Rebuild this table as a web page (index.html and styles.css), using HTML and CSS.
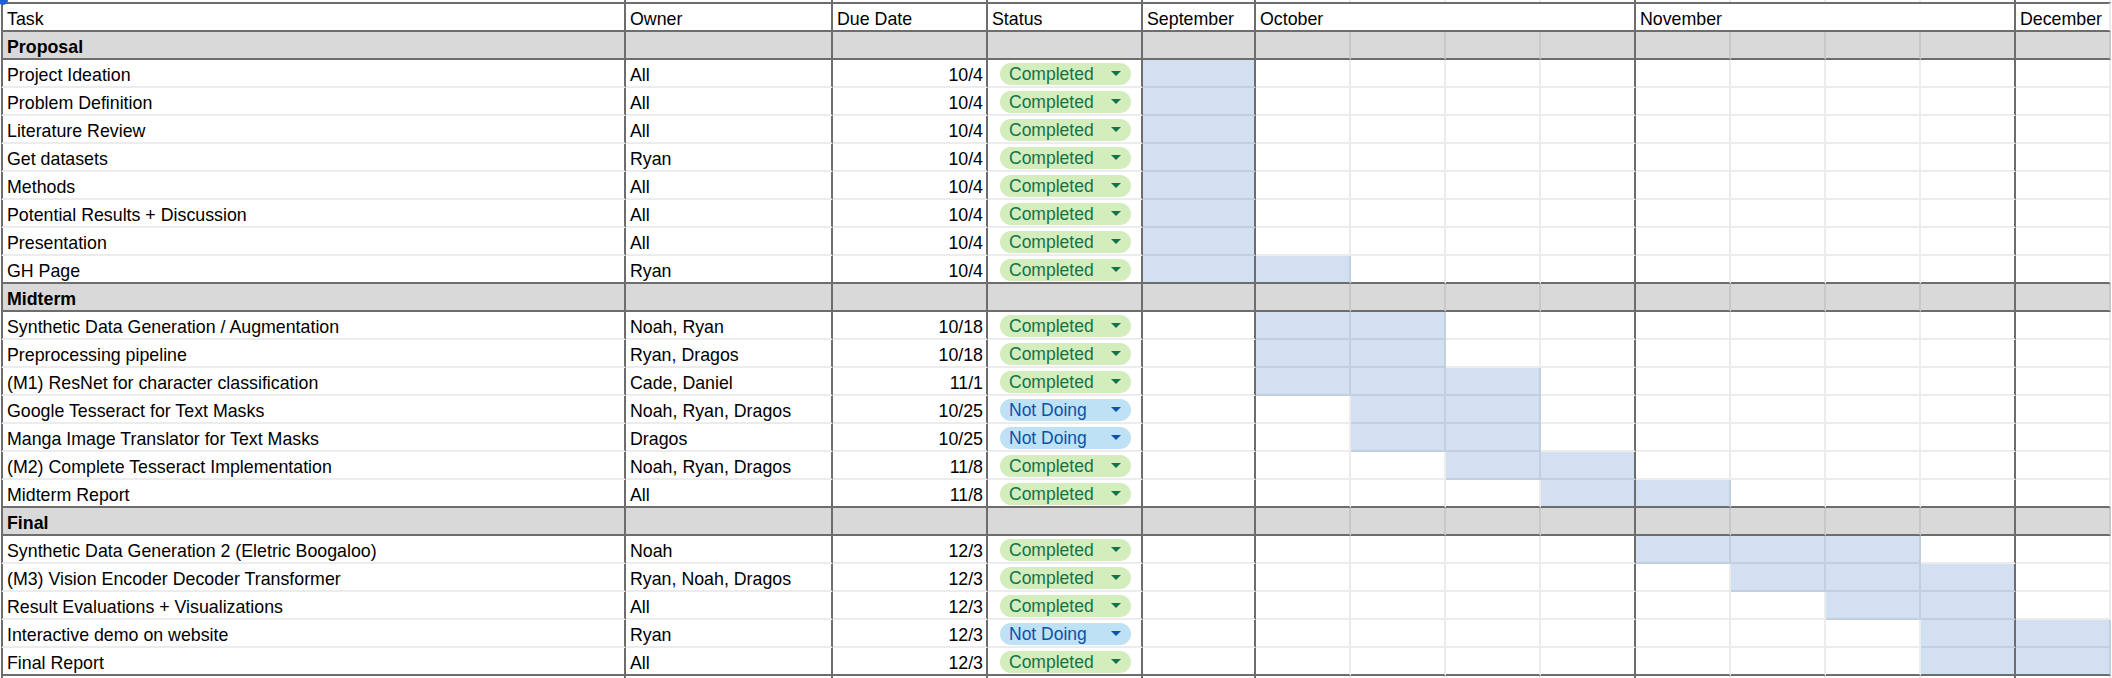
FILE: index.html
```html
<!DOCTYPE html>
<html lang="en">
<head>
<meta charset="utf-8">
<title>Project Timeline</title>
<link rel="stylesheet" href="styles.css">
</head>
<body>
<div class="sheet">
  <span class="dot"></span>
  <div class="row peek"><div></div><div></div><div></div><div></div><div></div><div></div><div></div><div></div><div></div><div></div><div></div><div></div><div></div><div></div></div>
  <div class="row head"><div>Task</div><div>Owner</div><div>Due Date</div><div>Status</div><div>September</div><div class="m4">October</div><div class="m4">November</div><div class="dec">December</div></div>

  <div class="row sec"><div>Proposal</div><div></div><div></div><div></div><div></div><div></div><div></div><div></div><div></div><div></div><div></div><div></div><div></div><div></div></div>
  <div class="row"><div>Project Ideation</div><div>All</div><div class="due">10/4</div><div class="status"><span class="pill done">Completed<svg class="caret" viewBox="0 0 10 5"><path d="M0 0H10L5 5Z"/></svg></span></div><div class="b"></div><div></div><div></div><div></div><div></div><div></div><div></div><div></div><div></div><div></div></div>
  <div class="row"><div>Problem Definition</div><div>All</div><div class="due">10/4</div><div class="status"><span class="pill done">Completed<svg class="caret" viewBox="0 0 10 5"><path d="M0 0H10L5 5Z"/></svg></span></div><div class="b"></div><div></div><div></div><div></div><div></div><div></div><div></div><div></div><div></div><div></div></div>
  <div class="row"><div>Literature Review</div><div>All</div><div class="due">10/4</div><div class="status"><span class="pill done">Completed<svg class="caret" viewBox="0 0 10 5"><path d="M0 0H10L5 5Z"/></svg></span></div><div class="b"></div><div></div><div></div><div></div><div></div><div></div><div></div><div></div><div></div><div></div></div>
  <div class="row"><div>Get datasets</div><div>Ryan</div><div class="due">10/4</div><div class="status"><span class="pill done">Completed<svg class="caret" viewBox="0 0 10 5"><path d="M0 0H10L5 5Z"/></svg></span></div><div class="b"></div><div></div><div></div><div></div><div></div><div></div><div></div><div></div><div></div><div></div></div>
  <div class="row"><div>Methods</div><div>All</div><div class="due">10/4</div><div class="status"><span class="pill done">Completed<svg class="caret" viewBox="0 0 10 5"><path d="M0 0H10L5 5Z"/></svg></span></div><div class="b"></div><div></div><div></div><div></div><div></div><div></div><div></div><div></div><div></div><div></div></div>
  <div class="row"><div>Potential Results + Discussion</div><div>All</div><div class="due">10/4</div><div class="status"><span class="pill done">Completed<svg class="caret" viewBox="0 0 10 5"><path d="M0 0H10L5 5Z"/></svg></span></div><div class="b"></div><div></div><div></div><div></div><div></div><div></div><div></div><div></div><div></div><div></div></div>
  <div class="row"><div>Presentation</div><div>All</div><div class="due">10/4</div><div class="status"><span class="pill done">Completed<svg class="caret" viewBox="0 0 10 5"><path d="M0 0H10L5 5Z"/></svg></span></div><div class="b"></div><div></div><div></div><div></div><div></div><div></div><div></div><div></div><div></div><div></div></div>
  <div class="row end"><div>GH Page</div><div>Ryan</div><div class="due">10/4</div><div class="status"><span class="pill done">Completed<svg class="caret" viewBox="0 0 10 5"><path d="M0 0H10L5 5Z"/></svg></span></div><div class="b"></div><div class="b"></div><div></div><div></div><div></div><div></div><div></div><div></div><div></div><div></div></div>

  <div class="row sec"><div>Midterm</div><div></div><div></div><div></div><div></div><div></div><div></div><div></div><div></div><div></div><div></div><div></div><div></div><div></div></div>
  <div class="row"><div>Synthetic Data Generation / Augmentation</div><div>Noah, Ryan</div><div class="due">10/18</div><div class="status"><span class="pill done">Completed<svg class="caret" viewBox="0 0 10 5"><path d="M0 0H10L5 5Z"/></svg></span></div><div></div><div class="b"></div><div class="b"></div><div></div><div></div><div></div><div></div><div></div><div></div><div></div></div>
  <div class="row"><div>Preprocessing pipeline</div><div>Ryan, Dragos</div><div class="due">10/18</div><div class="status"><span class="pill done">Completed<svg class="caret" viewBox="0 0 10 5"><path d="M0 0H10L5 5Z"/></svg></span></div><div></div><div class="b"></div><div class="b"></div><div></div><div></div><div></div><div></div><div></div><div></div><div></div></div>
  <div class="row"><div>(M1) ResNet for character classification</div><div>Cade, Daniel</div><div class="due">11/1</div><div class="status"><span class="pill done">Completed<svg class="caret" viewBox="0 0 10 5"><path d="M0 0H10L5 5Z"/></svg></span></div><div></div><div class="b"></div><div class="b"></div><div class="b"></div><div></div><div></div><div></div><div></div><div></div><div></div></div>
  <div class="row"><div>Google Tesseract for Text Masks</div><div>Noah, Ryan, Dragos</div><div class="due">10/25</div><div class="status"><span class="pill skip">Not Doing<svg class="caret" viewBox="0 0 10 5"><path d="M0 0H10L5 5Z"/></svg></span></div><div></div><div></div><div class="b"></div><div class="b"></div><div></div><div></div><div></div><div></div><div></div><div></div></div>
  <div class="row"><div>Manga Image Translator for Text Masks</div><div>Dragos</div><div class="due">10/25</div><div class="status"><span class="pill skip">Not Doing<svg class="caret" viewBox="0 0 10 5"><path d="M0 0H10L5 5Z"/></svg></span></div><div></div><div></div><div class="b"></div><div class="b"></div><div></div><div></div><div></div><div></div><div></div><div></div></div>
  <div class="row"><div>(M2) Complete Tesseract Implementation</div><div>Noah, Ryan, Dragos</div><div class="due">11/8</div><div class="status"><span class="pill done">Completed<svg class="caret" viewBox="0 0 10 5"><path d="M0 0H10L5 5Z"/></svg></span></div><div></div><div></div><div></div><div class="b"></div><div class="b"></div><div></div><div></div><div></div><div></div><div></div></div>
  <div class="row end"><div>Midterm Report</div><div>All</div><div class="due">11/8</div><div class="status"><span class="pill done">Completed<svg class="caret" viewBox="0 0 10 5"><path d="M0 0H10L5 5Z"/></svg></span></div><div></div><div></div><div></div><div></div><div class="b"></div><div class="b"></div><div></div><div></div><div></div><div></div></div>

  <div class="row sec"><div>Final</div><div></div><div></div><div></div><div></div><div></div><div></div><div></div><div></div><div></div><div></div><div></div><div></div><div></div></div>
  <div class="row"><div>Synthetic Data Generation 2 (Eletric Boogaloo)</div><div>Noah</div><div class="due">12/3</div><div class="status"><span class="pill done">Completed<svg class="caret" viewBox="0 0 10 5"><path d="M0 0H10L5 5Z"/></svg></span></div><div></div><div></div><div></div><div></div><div></div><div class="b"></div><div class="b"></div><div class="b"></div><div></div><div></div></div>
  <div class="row"><div>(M3) Vision Encoder Decoder Transformer</div><div>Ryan, Noah, Dragos</div><div class="due">12/3</div><div class="status"><span class="pill done">Completed<svg class="caret" viewBox="0 0 10 5"><path d="M0 0H10L5 5Z"/></svg></span></div><div></div><div></div><div></div><div></div><div></div><div></div><div class="b"></div><div class="b"></div><div class="b"></div><div></div></div>
  <div class="row"><div>Result Evaluations + Visualizations</div><div>All</div><div class="due">12/3</div><div class="status"><span class="pill done">Completed<svg class="caret" viewBox="0 0 10 5"><path d="M0 0H10L5 5Z"/></svg></span></div><div></div><div></div><div></div><div></div><div></div><div></div><div></div><div class="b"></div><div class="b"></div><div></div></div>
  <div class="row"><div>Interactive demo on website</div><div>Ryan</div><div class="due">12/3</div><div class="status"><span class="pill skip">Not Doing<svg class="caret" viewBox="0 0 10 5"><path d="M0 0H10L5 5Z"/></svg></span></div><div></div><div></div><div></div><div></div><div></div><div></div><div></div><div></div><div class="b"></div><div class="b"></div></div>
  <div class="row end"><div>Final Report</div><div>All</div><div class="due">12/3</div><div class="status"><span class="pill done">Completed<svg class="caret" viewBox="0 0 10 5"><path d="M0 0H10L5 5Z"/></svg></span></div><div></div><div></div><div></div><div></div><div></div><div></div><div></div><div></div><div class="b"></div><div class="b"></div></div>
  <div class="row peek"><div></div><div></div><div></div><div></div><div></div><div></div><div></div><div></div><div></div><div></div><div></div><div></div><div></div><div></div></div>
</div>
</body>
</html>
```

FILE: styles.css
```css
:root {
  --dark: #6d6d6d;
  --light: rgba(0, 0, 0, 0.075);
  --gantt: #d2e0f1;
  --section: #d9d9d9;
}

html, body {
  margin: 0;
  padding: 0;
  background: #fff;
}

body {
  width: 2112px;
  height: 678px;
  overflow: hidden;
  font-family: "Liberation Sans", Arial, sans-serif;
  font-size: 17.8px;
  color: #000;
}

.sheet {
  position: relative;
  margin-left: 1px;
  width: 2110px;
}

.dot {
  position: absolute;
  left: -3px;
  top: -5px;
  width: 10px;
  height: 10px;
  border-radius: 50%;
  background: #1f61d8;
  z-index: 2;
}

.row {
  display: grid;
  grid-template-columns: 625px 207px 155px 155px 113px repeat(9, 95px);
  height: 28px;
}

.row > div {
  box-sizing: border-box;
  border-right: 2px solid var(--dark);
  border-bottom: 2px solid var(--light);
  padding: 0 4px 1px;
  display: flex;
  align-items: flex-end;
  line-height: 20px;
  white-space: nowrap;
  overflow: hidden;
  min-width: 0;
}

.row > div:first-child {
  border-left: 2px solid var(--dark);
}

.row > div:nth-child(6),
.row > div:nth-child(7),
.row > div:nth-child(8),
.row > div:nth-child(10),
.row > div:nth-child(11),
.row > div:nth-child(12),
.row > div:nth-child(14) {
  border-right-color: var(--light);
}

/* peek rows (rows of the sheet above/below the range) */
.row.peek {
  height: 2px;
}
.row.peek > div {
  border-bottom: 0;
  padding: 0;
}

/* header */
.row.head {
  height: 30px;
}
.row.head > div {
  border-top: 2px solid var(--dark);
  border-bottom-color: var(--dark);
  border-right-color: var(--dark);
}
.row.head > .m4 {
  grid-column: span 4;
}
.row.head > .dec {
  border-right-color: var(--light);
}

/* section rows */
.row.sec > div {
  background: var(--section);
  border-bottom-color: var(--dark);
}
.row.sec > div:first-child {
  font-weight: bold;
}

.row.end > div {
  border-bottom-color: var(--dark);
}

.row > div.due {
  justify-content: flex-end;
  padding-right: 3px;
}

.row > div.status {
  align-items: center;
  padding: 1px 0 0 12px;
}

.row > div.b {
  background: var(--gantt);
}

.pill {
  box-sizing: border-box;
  display: flex;
  align-items: center;
  justify-content: space-between;
  width: 131px;
  height: 22px;
  padding: 0 10px 0 9px;
  border-radius: 11px;
  font-size: 17.5px;
  line-height: 22px;
}

.pill.done {
  background: #d4edbc;
  color: #11734b;
}

.pill.skip {
  background: #bfe1f6;
  color: #0a53a8;
}

.caret {
  width: 10px;
  height: 5px;
  fill: currentColor;
  flex: none;
}
```
